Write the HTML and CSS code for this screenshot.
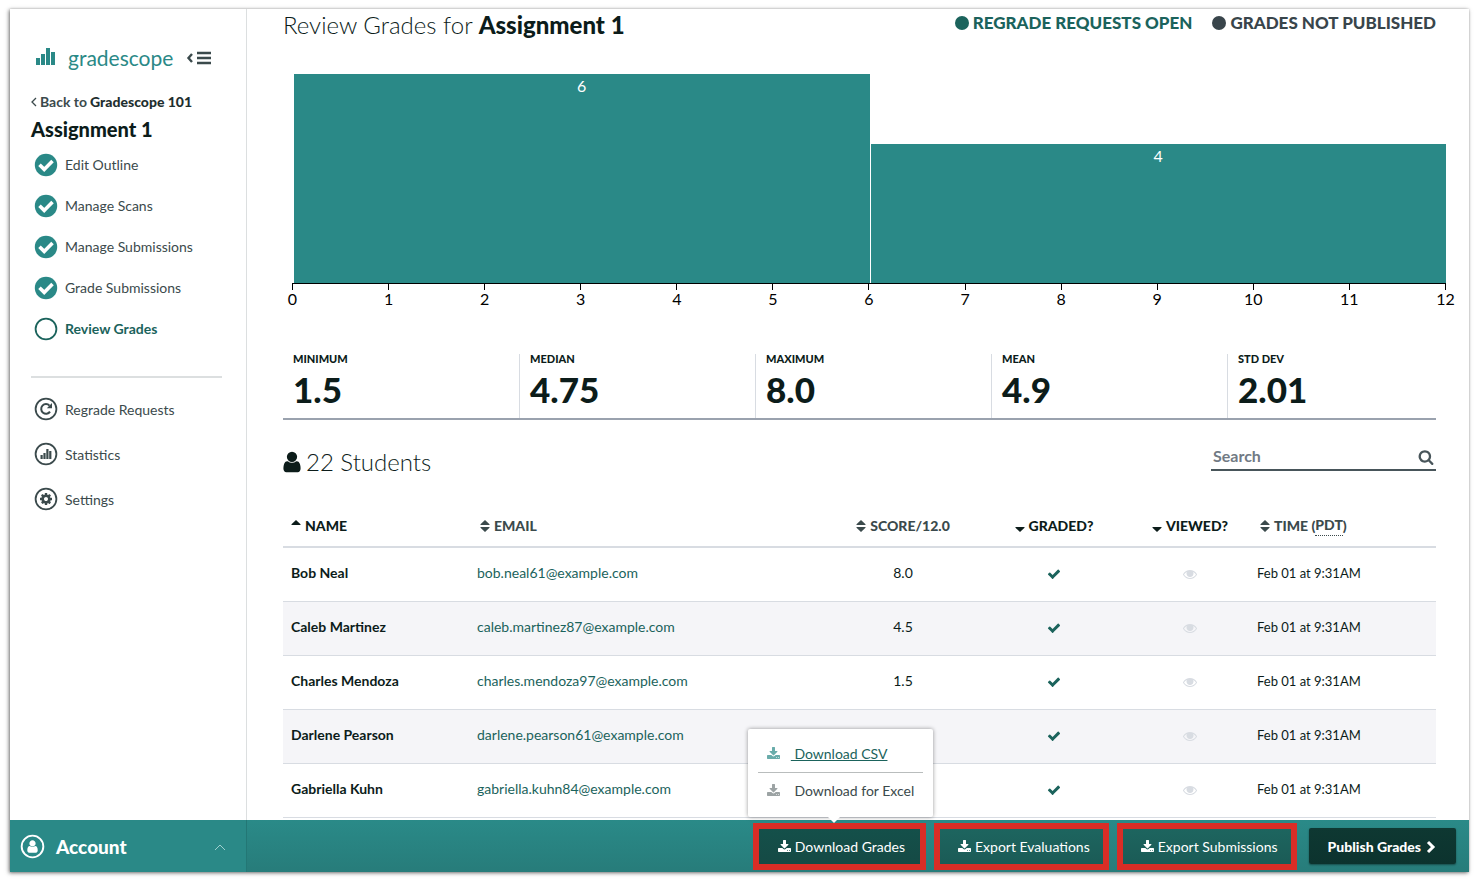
FILE: index.html
```html
<!DOCTYPE html>
<html lang="en">

<head>
    <meta charset="UTF-8">
    <meta name="viewport" content="width=device-width, initial-scale=1.0">
    <title>Review Grades | Gradescope</title>
    <link rel="stylesheet" href="styles.css">
</head>

<body>
    <svg class="sprite" aria-hidden="true">
        <symbol id="icon-download" viewBox="0 0 1792 1792">
            <path d="M1280 1344q0-26-19-45t-45-19-45 19-19 45 19 45 45 19 45-19 19-45zm256 0q0-26-19-45t-45-19-45 19-19 45 19 45 45 19 45-19 19-45zm128-224v320q0 40-28 68t-68 28h-1472q-40 0-68-28t-28-68v-320q0-40 28-68t68-28h465l135 136q58 56 136 56t136-56l136-136h464q40 0 68 28t28 68zm-325-569q17 41-14 70l-448 448q-18 19-45 19t-45-19l-448-448q-31-29-14-70 17-39 59-39h256v-448q0-26 19-45t45-19h256q26 0 45 19t19 45v448h256q42 0 59 39z" />
        </symbol>
        <symbol id="icon-check" viewBox="0 0 1792 1792">
            <path d="M1671 566q0 40-28 68l-724 724-136 136q-28 28-68 28t-68-28l-136-136-362-362q-28-28-28-68t28-68l136-136q28-28 68-28t68 28l294 295 656-657q28-28 68-28t68 28l136 136q28 28 28 68z" />
        </symbol>
        <symbol id="icon-eye" viewBox="0 0 1792 1792">
            <path d="M1664 960q-152-236-381-353 61 104 61 225 0 185-131.5 316.5t-316.5 131.5-316.5-131.5-131.5-316.5q0-121 61-225-229 117-381 353 133 205 333.5 326.5t434.5 121.5 434.5-121.5 333.5-326.5zm128 0q0 34-20 69-140 230-376.5 368.5t-499.5 138.5-499.5-139-376.5-368q-20-35-20-69t20-69q140-229 376.5-368t499.5-139 499.5 139 376.5 368q20 35 20 69z" />
            <circle cx="920" cy="860" r="350" />
        </symbol>
        <symbol id="icon-user" viewBox="0 0 1792 1792">
            <path d="M1536 1399q0 109-62.500 187t-150.500 78h-854q-88 0-150.500-78t-62.500-187q0-85 8.500-160.500t31.500-152 58.500-131 94-89 134.500-34.500q131 128 313 128t313-128q76 0 134.500 34.500t94 89 58.500 131 31.500 152 8.500 160.500zm-256-887q0 159-112.500 271.500t-271.500 112.500-271.500-112.500-112.500-271.500 112.500-271.500 271.500-112.500 271.500 112.500 112.500 271.500z" />
        </symbol>
        <symbol id="icon-search" viewBox="0 0 1792 1792">
            <path d="M1216 832q0-185-131.500-316.500t-316.500-131.500-316.500 131.500-131.500 316.500 131.500 316.500 316.500 131.500 316.500-131.500 131.500-316.500zm512 832q0 52-38 90t-90 38q-54 0-90-38l-343-342q-179 124-399 124-143 0-273.500-55.500t-225-150-150-225-55.500-273.500 55.500-273.500 150-225 225-150 273.500-55.500 273.500 55.500 225 150 150 225 55.500 273.500q0 220-124 399l343 343q37 37 37 90z" />
        </symbol>
        <symbol id="icon-cog" viewBox="0 0 1792 1792">
            <path d="M1152 896q0-106-75-181t-181-75-181 75-75 181 75 181 181 75 181-75 75-181zm512-109v222q0 12-8 23t-20 13l-185 28q-19 54-39 91 35 50 107 138 10 12 10 25t-9 23q-27 37-99 108t-94 71q-12 0-26-9l-138-108q-44 23-91 38-16 136-29 186-7 28-36 28h-222q-14 0-24.500-8.500t-11.500-21.500l-28-184q-49-16-90-37l-141 107q-10 9-25 9-14 0-25-11-126-114-165-168-7-10-7-23 0-12 8-23 15-21 51-66.500t54-70.500q-27-50-41-99l-183-27q-13-2-21-12.500t-8-23.500v-222q0-12 8-23t19-13l186-28q14-46 39-92-40-57-107-138-10-12-10-24 0-10 9-23 26-36 98.500-107.500t94.500-71.500q13 0 26 10l138 107q44-23 91-38 16-136 29-186 7-28 36-28h222q14 0 24.500 8.500t11.500 21.500l28 184q49 16 90 37l142-107q9-9 24-9 13 0 25 10 129 119 165 170 7 8 7 22 0 12-8 23-15 21-51 66.500t-54 70.500q26 50 41 98l183 28q13 2 21 12.500t8 23.500z" />
        </symbol>
        <symbol id="icon-sort" viewBox="0 0 10 12">
            <path d="M5 0l4.500 4.200v.8h-9v-.8zM5 12L.5 7.800V7h9v.8z" />
        </symbol>
        <symbol id="icon-asc" viewBox="0 0 10 12">
            <path d="M5 0l4.500 4.200v.8h-9v-.8z" />
        </symbol>
        <symbol id="icon-desc" viewBox="0 0 10 12">
            <path d="M5 12L.5 7.800V7h9v.8z" />
        </symbol>
        <symbol id="icon-done" viewBox="0 0 24 24">
            <circle cx="12" cy="12" r="11.200" />
            <path d="M5.500 11.800l4.700 4.600 8.300-8.300" fill="none" stroke="#fff" stroke-width="3.600" />
        </symbol>
        <symbol id="icon-current" viewBox="0 0 24 24">
            <circle cx="12" cy="12" r="10.400" fill="none" stroke="currentColor" stroke-width="1.800" />
        </symbol>
    </svg>

    <div id="app">
        <aside id="sidebar">
            <div id="brand">
                <a href="#" id="logo">
                    <svg width="20" height="18" viewBox="0 0 20 18" aria-hidden="true">
                        <path d="M0 10h4v7H0zM5 6h4v11H5zM10 0h4v17h-4zM15 4h4v13h-4z" />
                    </svg>
                    <span>gradescope</span>
                </a>
                <button id="collapse" aria-label="Collapse sidebar">
                    <svg class="outline" width="26" height="14" viewBox="0 0 26 14" stroke-width="2.400">
                        <path d="M6 3L2.500 7 6 11" />
                        <path d="M11 2h14M11 7h14M11 12h14" />
                    </svg>
                </button>
            </div>
            <a href="#" id="back">
                <svg class="outline" width="6" height="10" viewBox="0 0 6 10" stroke-width="1.300" aria-hidden="true">
                    <path d="M5 1L1 5l4 4" />
                </svg>
                Back to <strong>Gradescope 101</strong>
            </a>
            <h2>Assignment 1</h2>
            <nav class="steps">
                <a href="#"><svg><use href="#icon-done" /></svg>Edit Outline</a>
                <a href="#"><svg><use href="#icon-done" /></svg>Manage Scans</a>
                <a href="#"><svg><use href="#icon-done" /></svg>Manage Submissions</a>
                <a href="#"><svg><use href="#icon-done" /></svg>Grade Submissions</a>
                <a href="#" class="active"><svg><use href="#icon-current" /></svg>Review Grades</a>
            </nav>
            <nav class="tools">
                <a href="#">
                    <svg viewBox="0 0 24 24">
                        <use href="#icon-current" />
                        <path d="M15.500 8.600A4.800 4.800 0 1 0 16 14.600" fill="none" stroke="currentColor" stroke-width="2" />
                        <path d="M18 6v5.200h-5.200z" />
                    </svg>
                    Regrade Requests
                </a>
                <a href="#">
                    <svg viewBox="0 0 24 24">
                        <use href="#icon-current" />
                        <path d="M6.500 13h2.200v4H6.500zM9.400 11h2.200v6H9.400zM12.300 7h2.200v10h-2.200zM15.200 9h2.200v8h-2.200z" />
                    </svg>
                    Statistics
                </a>
                <a href="#">
                    <svg viewBox="0 0 24 24">
                        <use href="#icon-current" />
                        <use href="#icon-cog" x="5" y="5" width="14" height="14" />
                    </svg>
                    Settings
                </a>
            </nav>
        </aside>

        <main>
            <div id="page-head">
                <h1>Review Grades for <strong>Assignment 1</strong></h1>
                <div id="status">
                    <span class="open">Regrade Requests Open</span>
                    <span class="closed">Grades Not Published</span>
                </div>
            </div>

            <div id="chart">
                <div class="bars">
                    <div class="bar" style="height: 100%">6</div>
                    <div class="bar" style="height: 66.700%">4</div>
                </div>
                <ol class="axis">
                    <li>0</li>
                    <li>1</li>
                    <li>2</li>
                    <li>3</li>
                    <li>4</li>
                    <li>5</li>
                    <li>6</li>
                    <li>7</li>
                    <li>8</li>
                    <li>9</li>
                    <li>10</li>
                    <li>11</li>
                    <li>12</li>
                </ol>
            </div>

            <dl id="stats">
                <div><dt>Minimum</dt><dd>1.5</dd></div>
                <div><dt>Median</dt><dd>4.75</dd></div>
                <div><dt>Maximum</dt><dd>8.0</dd></div>
                <div><dt>Mean</dt><dd>4.9</dd></div>
                <div><dt>Std Dev</dt><dd>2.01</dd></div>
            </dl>

            <div id="table-head">
                <h3><svg><use href="#icon-user" /></svg>22 Students</h3>
                <label id="search">
                    <input type="text" placeholder="Search" aria-label="Search">
                    <svg><use href="#icon-search" /></svg>
                </label>
            </div>

            <table>
                <colgroup>
                    <col class="col-name">
                    <col class="col-email">
                    <col class="col-score">
                    <col class="col-graded">
                    <col class="col-viewed">
                    <col class="col-time">
                </colgroup>
                <thead>
                    <tr>
                        <th class="sorted"><button><svg><use href="#icon-asc" /></svg>Name</button></th>
                        <th class="inset"><button><svg><use href="#icon-sort" /></svg>Email</button></th>
                        <th class="center"><button><svg><use href="#icon-sort" /></svg>Score/12.0</button></th>
                        <th class="center sorted"><button><svg><use href="#icon-desc" /></svg>Graded?</button></th>
                        <th class="center sorted"><button><svg><use href="#icon-desc" /></svg>Viewed?</button></th>
                        <th class="inset"><button><svg><use href="#icon-sort" /></svg>Time (<abbr title="Pacific Daylight Time">PDT</abbr>)</button></th>
                    </tr>
                </thead>
                <tbody>
                    <tr>
                        <td class="name">Bob Neal</td>
                        <td><a href="#">bob.neal61@example.com</a></td>
                        <td class="center">8.0</td>
                        <td class="center"><svg class="check"><use href="#icon-check" /></svg></td>
                        <td class="center"><svg class="eye"><use href="#icon-eye" /></svg></td>
                        <td class="time">Feb 01 at 9:31AM</td>
                    </tr>
                    <tr>
                        <td class="name">Caleb Martinez</td>
                        <td><a href="#">caleb.martinez87@example.com</a></td>
                        <td class="center">4.5</td>
                        <td class="center"><svg class="check"><use href="#icon-check" /></svg></td>
                        <td class="center"><svg class="eye"><use href="#icon-eye" /></svg></td>
                        <td class="time">Feb 01 at 9:31AM</td>
                    </tr>
                    <tr>
                        <td class="name">Charles Mendoza</td>
                        <td><a href="#">charles.mendoza97@example.com</a></td>
                        <td class="center">1.5</td>
                        <td class="center"><svg class="check"><use href="#icon-check" /></svg></td>
                        <td class="center"><svg class="eye"><use href="#icon-eye" /></svg></td>
                        <td class="time">Feb 01 at 9:31AM</td>
                    </tr>
                    <tr>
                        <td class="name">Darlene Pearson</td>
                        <td><a href="#">darlene.pearson61@example.com</a></td>
                        <td class="center"></td>
                        <td class="center"><svg class="check"><use href="#icon-check" /></svg></td>
                        <td class="center"><svg class="eye"><use href="#icon-eye" /></svg></td>
                        <td class="time">Feb 01 at 9:31AM</td>
                    </tr>
                    <tr>
                        <td class="name">Gabriella Kuhn</td>
                        <td><a href="#">gabriella.kuhn84@example.com</a></td>
                        <td class="center"></td>
                        <td class="center"><svg class="check"><use href="#icon-check" /></svg></td>
                        <td class="center"><svg class="eye"><use href="#icon-eye" /></svg></td>
                        <td class="time">Feb 01 at 9:31AM</td>
                    </tr>
                </tbody>
            </table>
        </main>

        <button id="account">
            <svg class="avatar" viewBox="0 0 24 24">
                <use href="#icon-current" />
                <use href="#icon-user" x="5" y="5" width="14" height="14" />
            </svg>
            <span>Account</span>
            <svg class="caret outline" width="12" height="8" viewBox="0 0 12 8">
                <path d="M1 7l5-5 5 5" />
            </svg>
        </button>

        <footer>
            <div class="highlight">
                <button class="btn pressed"><svg><use href="#icon-download" /></svg>Download Grades</button>
                <div id="download-menu">
                    <a href="#" class="csv"><svg><use href="#icon-download" /></svg><span>&nbsp;Download CSV</span></a>
                    <a href="#"><svg><use href="#icon-download" /></svg><span>&nbsp;Download for Excel</span></a>
                </div>
            </div>
            <div class="highlight">
                <button class="btn"><svg><use href="#icon-download" /></svg>Export Evaluations</button>
            </div>
            <div class="highlight">
                <button class="btn"><svg><use href="#icon-download" /></svg>Export Submissions</button>
            </div>
            <button class="btn publish">
                Publish Grades
                <svg class="outline" viewBox="0 0 14 14" stroke-width="3">
                    <path d="M5 2l5 5-5 5" />
                </svg>
            </button>
        </footer>
    </div>
</body>

</html>
```

FILE: styles.css
```css
:root {
    --teal: #2a8987;
    --teal-dark: #1b635c;
    --ink: #0c1c1a;
    --slate: #3b4a4c;
    --line: #d8dce2;
}

* {
    box-sizing: border-box;
}

body {
    margin: 0;
    padding: 9px 8px 10px 10px;
    background-color: #fff;
    color: var(--ink);
    font-family: Lato, "Liberation Sans", sans-serif;
    font-size: 14px;
    line-height: 20px;
}

h1,
h2,
h3,
dl,
dd,
ol {
    margin: 0;
    padding: 0;
}

a {
    color: inherit;
    text-decoration: none;
}

button {
    border: none;
    padding: 0;
    background: none;
    color: inherit;
    font: inherit;
    cursor: pointer;
}

svg {
    fill: currentColor;
    flex: none;
}

svg.outline {
    fill: none;
    stroke: currentColor;
}

.sprite {
    position: absolute;
    width: 0;
    height: 0;
}

#app {
    display: grid;
    grid-template-columns: 237px 1fr;
    grid-template-rows: 1fr 52px;
    min-height: calc(100vh - 19px);
    box-shadow: -1px 1px 4px rgba(0, 0, 0, 0.55), 0 0 2px rgba(0, 0, 0, 0.15);
    background-color: #fff;
}

/* sidebar */

#sidebar {
    border-right: 1px solid #dcdfe0;
    padding: 36px 24px 0 21px;
    color: var(--slate);
}

#brand {
    display: flex;
    align-items: center;
    gap: 13px;
    height: 26px;
    padding-left: 5px;
}

#logo {
    display: flex;
    align-items: center;
    gap: 12px;
    color: var(--teal);
    font-size: 21px;
}

#logo svg {
    margin-bottom: 3px;
}

#collapse {
    display: flex;
}

#back {
    display: flex;
    align-items: center;
    gap: 3px;
    margin-top: 21px;
    font-weight: bold;
}

#back strong {
    color: #1f2f30;
}

#sidebar h2 {
    margin-top: 4px;
    color: var(--ink);
    font-size: 20px;
    font-weight: 900;
    line-height: 26px;
}

.steps a,
.tools a {
    display: flex;
    align-items: center;
    gap: 7px;
    padding-left: 3px;
}

.steps svg,
.tools svg {
    width: 24px;
    height: 24px;
}

.steps {
    padding-bottom: 27px;
    border-bottom: 2px solid #dcdfe0;
    margin-top: 2px;
}

.steps a {
    height: 41px;
}

.steps svg {
    color: var(--teal);
}

.steps .active,
.steps .active svg {
    color: var(--teal-dark);
    font-weight: bold;
}

.tools {
    margin-top: 9px;
}

.tools a {
    height: 45px;
}

.tools svg {
    margin-bottom: 2px;
}

#account {
    display: flex;
    align-items: center;
    gap: 11px;
    border-right: 1px solid #237775;
    padding: 2px 20px 0 10px;
    background-color: var(--teal);
    color: #fff;
    font-size: 19px;
    font-weight: 900;
}

#account .avatar {
    width: 25px;
    height: 25px;
    margin-bottom: 2px;
}

#account .caret {
    margin-left: auto;
    color: #9fd0cf;
}

/* main */

main {
    padding: 0 33px 0 36px;
}

#page-head {
    display: flex;
    justify-content: space-between;
    height: 32px;
}

h1 {
    font-size: 24px;
    font-weight: 300;
    line-height: 32px;
}

h1 strong {
    font-weight: 900;
}

#status {
    display: flex;
    gap: 20px;
    height: 28px;
    font-size: 17px;
    font-weight: 900;
    text-transform: uppercase;
}

#status span {
    display: flex;
    align-items: center;
    gap: 4px;
}

#status span::before {
    content: "";
    width: 14px;
    height: 14px;
    border-radius: 50%;
    background-color: currentColor;
}

.open {
    color: var(--teal-dark);
}

.closed {
    color: #39454b;
}

#chart {
    margin: 33px -10px 0 9px;
    color: #000;
    font-size: 16px;
}

.bars {
    display: flex;
    align-items: flex-end;
    gap: 1px;
    height: 209px;
    padding-left: 2px;
}

.bar {
    flex: 1;
    padding-top: 2px;
    background-color: var(--teal);
    color: #fff;
    text-align: center;
}

.axis {
    display: flex;
    justify-content: space-between;
    border-top: 1px solid #000;
    line-height: 18px;
    list-style: none;
}

.axis li {
    display: flex;
    flex-direction: column;
    align-items: center;
    width: 1px;
}

.axis li::before {
    content: "";
    width: 1px;
    height: 6px;
    background-color: #000;
}

#stats {
    display: grid;
    grid-template-columns: repeat(4, 236fr) 209fr;
    border-bottom: 2px solid #9aa2ae;
    margin-top: 46px;
}

#stats div {
    height: 64px;
    padding-left: 10px;
}

#stats div + div {
    border-left: 1px solid var(--line);
}

#stats dt {
    font-size: 11px;
    font-weight: 900;
    line-height: 10px;
    text-transform: uppercase;
}

#stats dd {
    font-size: 35px;
    font-weight: 900;
    line-height: 50px;
}

#table-head {
    display: flex;
    justify-content: space-between;
    margin-top: 24px;
}

h3 {
    display: flex;
    align-items: center;
    gap: 2px;
    height: 36px;
    font-size: 24px;
    font-weight: 300;
}

h3 svg {
    width: 24px;
    height: 24px;
    margin-left: -3px;
}

#search {
    display: flex;
    align-items: center;
    width: 225px;
    height: 27px;
    border-bottom: 2px solid #48555a;
    padding: 0 2px;
    color: #48555a;
}

#search input {
    flex: 1;
    min-width: 0;
    border: none;
    padding: 0 0 2px;
    outline: none;
    font: bold 16px Lato, sans-serif;
}

#search input::placeholder {
    color: #717a84;
}

#search svg {
    width: 16px;
    height: 16px;
}

table {
    width: 100%;
    margin-top: 26px;
    border-collapse: separate;
    border-spacing: 0;
    table-layout: fixed;
}

.col-name {
    width: 186px;
}

.col-score {
    width: 148px;
}

.col-graded {
    width: 154px;
}

.col-viewed {
    width: 118px;
}

.col-time {
    width: 187px;
}

th {
    height: 42px;
    border-bottom: 2px solid var(--line);
    padding: 0 8px;
    color: var(--slate);
    font-weight: 900;
    text-align: left;
    white-space: nowrap;
}

th.inset {
    padding-left: 11px;
}

th.sorted {
    color: var(--ink);
}

th button {
    display: inline-flex;
    align-items: center;
    text-transform: uppercase;
}

th svg {
    width: 10px;
    height: 12px;
    margin-right: 4px;
}

abbr {
    border-bottom: 1px dotted var(--slate);
    text-decoration: none;
}

td {
    height: 54px;
    border-bottom: 1px solid var(--line);
    padding: 0 8px 3px;
}

th.center,
td.center {
    text-align: center;
}

tbody tr:nth-child(even) {
    background-color: #f5f5f8;
}

td.name {
    font-weight: bold;
}

td.time {
    font-size: 13px;
}

td a {
    color: var(--teal-dark);
}

td svg {
    width: 14px;
    height: 14px;
    vertical-align: middle;
}

.check {
    color: var(--teal-dark);
}

.eye {
    color: var(--line);
}

/* bottom bar */

footer {
    display: flex;
    align-items: center;
    justify-content: flex-end;
    gap: 8px;
    padding-right: 13px;
    background-image: linear-gradient(#2a8a88, #277c7a);
    color: #fff;
}

.highlight {
    position: relative;
    border: 6px solid #d92d26;
}

.btn {
    display: flex;
    align-items: center;
    justify-content: center;
    height: 35px;
    padding: 2px 13px 0 18px;
    background-image: linear-gradient(#1d655f, #1b5b56);
}

.btn svg {
    width: 14px;
    height: 14px;
    margin-right: 3px;
}

.btn.pressed {
    padding: 2px 15px 0 19px;
    background-image: linear-gradient(#14504a, #154a45);
}

.btn.publish {
    gap: 2px;
    height: 36px;
    border-radius: 2px;
    margin-left: 4px;
    padding: 2px 19px 0;
    background-image: linear-gradient(#0e3832, #0c332e);
    box-shadow: 0 1px 2px rgba(0, 0, 0, 0.4);
    font-weight: 900;
}

.btn.publish svg {
    margin: 0;
}

#download-menu {
    position: absolute;
    bottom: 47px;
    left: -11px;
    width: 185px;
    border-radius: 2px;
    padding: 8px 10px;
    background-color: #fff;
    box-shadow: 0 0 4px rgba(0, 0, 0, 0.4);
    color: var(--slate);
}

#download-menu::after {
    content: "";
    position: absolute;
    top: 100%;
    left: 80px;
    border: 6px solid transparent;
    border-top-color: #fff;
    border-bottom: none;
}

#download-menu a {
    display: flex;
    align-items: center;
    gap: 10px;
    height: 36px;
    padding-left: 9px;
}

#download-menu svg {
    width: 14px;
    height: 14px;
    opacity: 0.5;
}

#download-menu .csv {
    border-bottom: 1px solid #b9bdbd;
    color: var(--teal-dark);
}

#download-menu .csv span {
    text-decoration: underline;
}

#download-menu .csv svg {
    color: var(--teal);
    opacity: 0.7;
}
```
